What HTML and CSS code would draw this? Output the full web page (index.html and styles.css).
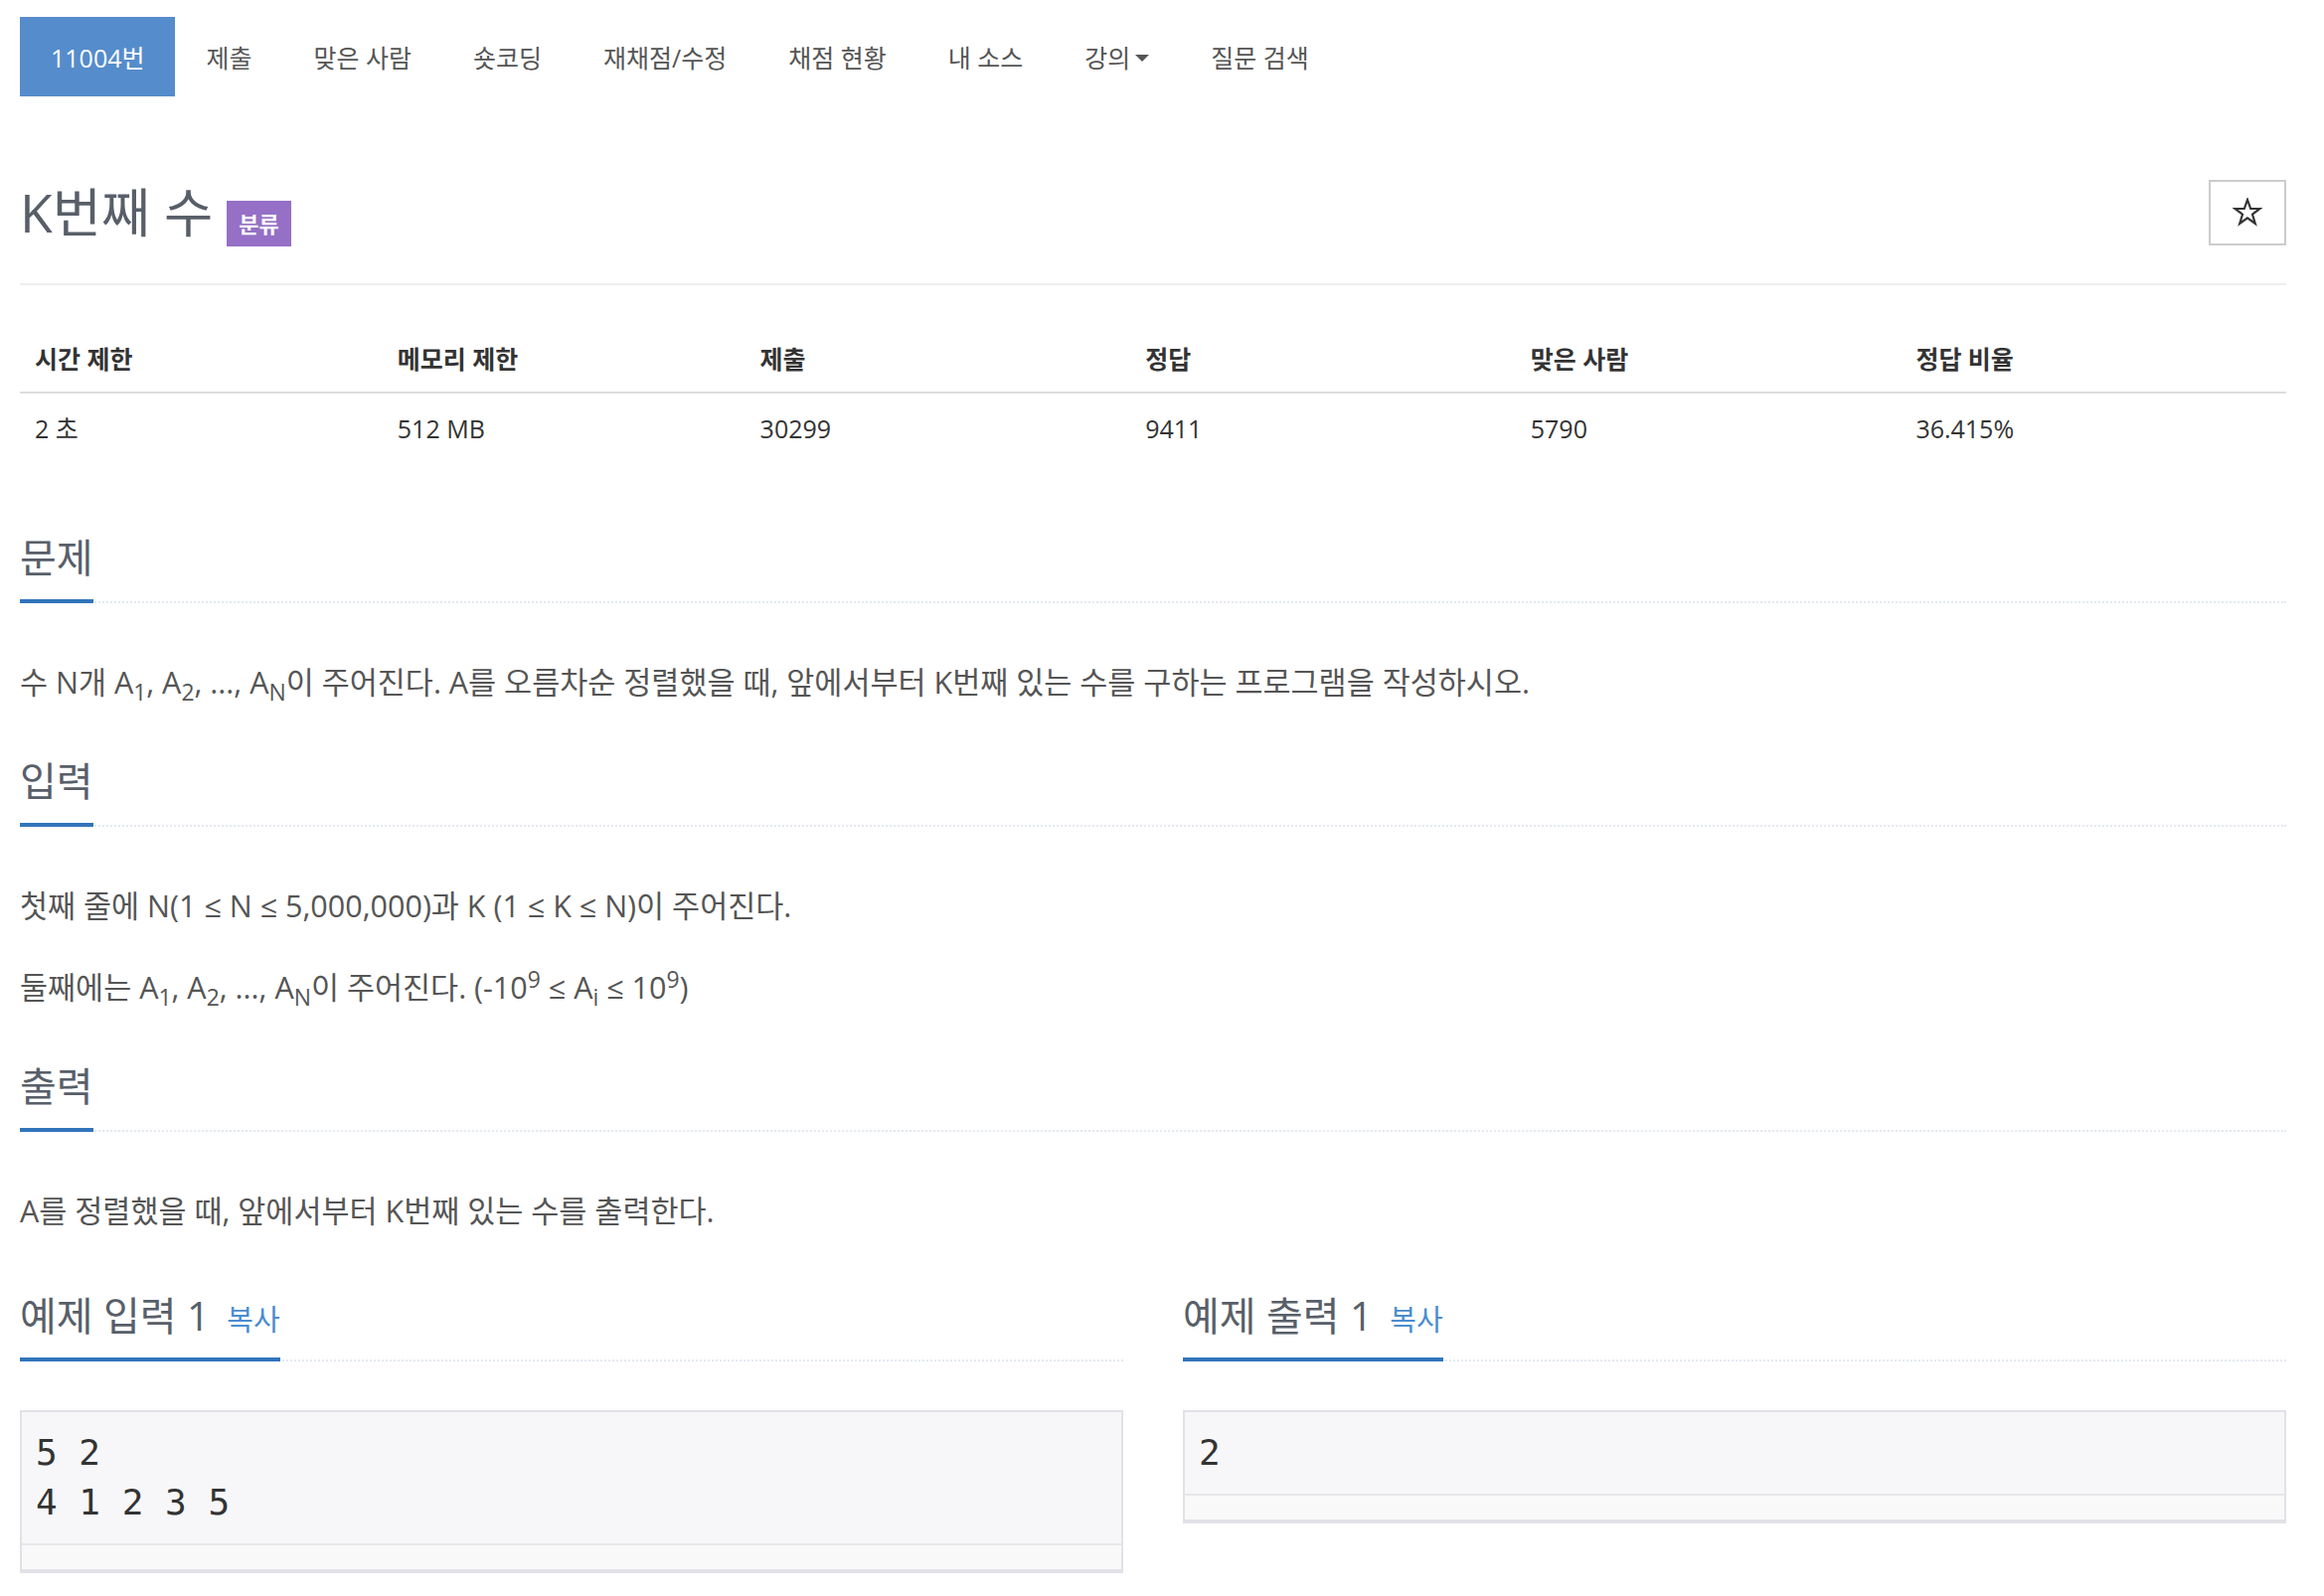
FILE: index.html
```html
<!DOCTYPE html>
<html lang="ko">
<head>
<meta charset="utf-8">
<title>11004번: K번째 수</title>
<link rel="stylesheet" href="styles.css">
</head>
<body>
<div class="page">
  <ul class="nav">
    <li class="nav-item active"><a>11004번</a></li>
    <li class="nav-item"><a>제출</a></li>
    <li class="nav-item"><a>맞은 사람</a></li>
    <li class="nav-item"><a>숏코딩</a></li>
    <li class="nav-item"><a>재채점/수정</a></li>
    <li class="nav-item"><a>채점 현황</a></li>
    <li class="nav-item"><a>내 소스</a></li>
    <li class="nav-item"><a>강의<span class="caret"></span></a></li>
    <li class="nav-item"><a>질문 검색</a></li>
  </ul>

  <div class="title-row">
    <h1 class="title">K번째 수 <span class="badge">분류</span></h1>
    <button class="star-btn" aria-label="즐겨찾기">
      <svg width="30" height="29" viewBox="0 0 30 29"><polygon points="15,2 18.2,11 27.6,11 20,16.7 22.8,26 15,20.4 7.2,26 10,16.7 2.4,11 11.8,11" fill="none" stroke="#333" stroke-width="2.2" stroke-linejoin="miter"/></svg>
    </button>
  </div>

  <table class="info">
    <thead>
      <tr>
        <th class="w16">시간 제한</th>
        <th class="w16">메모리 제한</th>
        <th class="w17">제출</th>
        <th class="w17">정답</th>
        <th class="w17">맞은 사람</th>
        <th class="w17">정답 비율</th>
      </tr>
    </thead>
    <tbody>
      <tr>
        <td>2 초</td>
        <td>512 MB</td>
        <td>30299</td>
        <td>9411</td>
        <td>5790</td>
        <td>36.415%</td>
      </tr>
    </tbody>
  </table>

  <section class="section">
    <div class="headline"><h2>문제</h2></div>
    <div class="desc">
      <p>수 N개 A<sub>1</sub>, A<sub>2</sub>, ..., A<sub>N</sub>이 주어진다. A를 오름차순 정렬했을 때, 앞에서부터 K번째 있는 수를 구하는 프로그램을 작성하시오.</p>
    </div>
  </section>

  <section class="section">
    <div class="headline"><h2>입력</h2></div>
    <div class="desc">
      <p>첫째 줄에 N(1 ≤ N ≤ 5,000,000)과 K (1 ≤ K ≤ N)이 주어진다.</p>
      <p>둘째에는 A<sub>1</sub>, A<sub>2</sub>, ..., A<sub>N</sub>이 주어진다. (-10<sup>9</sup> ≤ A<sub>i</sub> ≤ 10<sup>9</sup>)</p>
    </div>
  </section>

  <section class="section">
    <div class="headline"><h2>출력</h2></div>
    <div class="desc">
      <p>A를 정렬했을 때, 앞에서부터 K번째 있는 수를 출력한다.</p>
    </div>
  </section>

  <div class="samples">
    <section class="sample">
      <div class="headline"><h2>예제 입력 1 <button class="copy">복사</button></h2></div>
      <div class="sample-box">
        <pre>5 2
4 1 2 3 5</pre>
        <div class="sample-strip"></div>
      </div>
    </section>
    <section class="sample">
      <div class="headline"><h2>예제 출력 1 <button class="copy">복사</button></h2></div>
      <div class="sample-box">
        <pre>2</pre>
        <div class="sample-strip"></div>
      </div>
    </section>
  </div>
</div>
</body>
</html>
```

FILE: styles.css
```css
* { box-sizing: border-box; }

html, body {
  margin: 0;
  background: #fff;
}

body {
  font-family: "Open Sans", "Noto Sans CJK KR", sans-serif;
  color: #555;
}

.page {
  padding: 17px 38px 20px 20px;
}

/* navigation */
.nav {
  list-style: none;
  margin: 0;
  padding: 0;
  display: flex;
}

.nav-item a {
  display: flex;
  align-items: center;
  height: 80px;
  padding: 0 31px;
  font-size: 25px;
  color: #555;
  text-decoration: none;
  white-space: nowrap;
}

.nav-item.active a {
  background: #558ccb;
  color: #fff;
}

.caret {
  display: inline-block;
  width: 0;
  height: 0;
  border-top: 7px solid #555;
  border-left: 7px solid transparent;
  border-right: 7px solid transparent;
  margin-left: 5px;
  margin-top: 3px;
}

/* title */
.title-row {
  display: flex;
  align-items: center;
  justify-content: space-between;
  margin-top: 82px;
  padding-bottom: 37px;
  border-bottom: 2px solid #eee;
}

.title {
  margin: 0;
  padding-top: 6px;
  font-size: 53.5px;
  line-height: 57px;
  font-weight: 400;
  color: #585f69;
}

.badge {
  display: inline-block;
  font-size: 22px;
  line-height: 26px;
  padding: 10px 12px;
  background: #9570c6;
  color: #fff;
  font-weight: 700;
  vertical-align: baseline;
}

.star-btn {
  width: 78px;
  height: 66px;
  border: 2px solid #ccc;
  background: #fff;
  display: flex;
  align-items: center;
  justify-content: center;
  padding: 0;
}

/* info table */
.info {
  width: 100%;
  border-collapse: collapse;
  margin-top: 41px;
  margin-bottom: 67px;
  font-size: 25px;
  color: #333;
}

.info th,
.info td {
  text-align: left;
  padding: 16px 15px;
  line-height: 34px;
}

.info td {
  padding-top: 18px;
  padding-bottom: 14px;
}

.info th {
  font-weight: 700;
  border-bottom: 2px solid #ddd;
}

.w16 { width: 16%; }
.w17 { width: 17%; }

/* sections */
.section {
  margin-top: 45px;
}

.info + .section {
  margin-top: 0;
}

.headline {
  display: flex;
  border-bottom: 2px dotted #e4e9f0;
  margin-bottom: 56px;
}

.headline h2 {
  margin: 0 0 -2px;
  padding-bottom: 10px;
  border-bottom: 4px solid #3174bb;
  font-size: 40px;
  line-height: 64px;
  font-weight: 400;
  color: #585f69;
  white-space: nowrap;
}

.desc {
  font-size: 30.5px;
  line-height: 46px;
  color: #555;
}

.desc p {
  margin: 0 0 36px;
}

.desc p:last-child {
  margin-bottom: 0;
}

sub, sup {
  font-size: 75%;
  line-height: 0;
}

/* samples */
.samples {
  display: grid;
  grid-template-columns: 1fr 1fr;
  column-gap: 60px;
  align-items: start;
  margin-top: 51px;
}

.sample .headline {
  margin-bottom: 49px;
}

.copy {
  font-family: inherit;
  font-size: 29px;
  color: #4a8ccf;
  background: none;
  border: 0;
  padding: 0;
  margin-left: 7px;
  cursor: pointer;
}

.sample-box {
  border: 2px solid #e1e1e8;
  border-bottom-width: 4px;
  background: #f7f7f9;
}

.sample-box pre {
  margin: 0;
  padding: 16px 14px;
  font-family: "DejaVu Sans Mono", monospace;
  font-size: 36px;
  line-height: 50px;
  color: #333;
}

.sample-strip {
  height: 26px;
  border-top: 2px solid #e6e6ea;
  background: #f9f9f9;
}
```
